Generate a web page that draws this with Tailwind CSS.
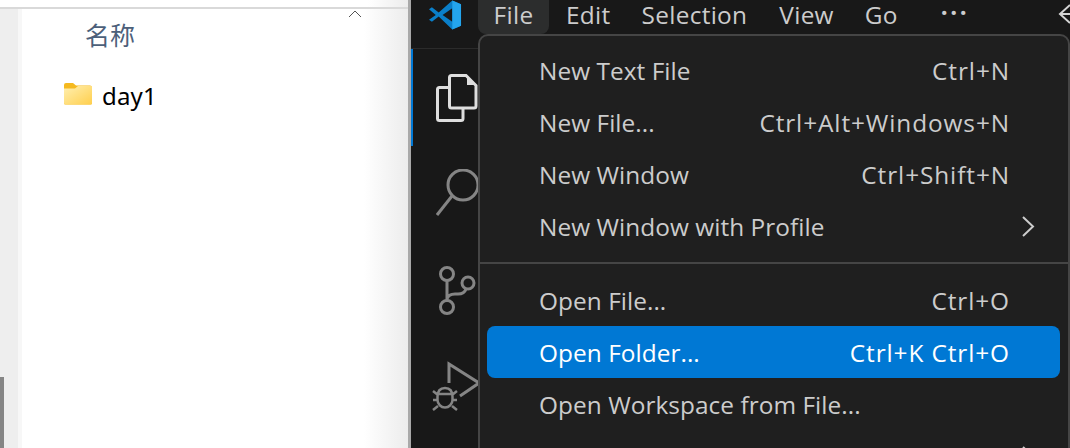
<!doctype html>
<html>
<head>
<meta charset="utf-8">
<script src="https://cdn.jsdelivr.net/npm/@tailwindcss/browser@4"></script>
</head>
<body class="m-0 overflow-hidden bg-white">
<div class="flex w-[1070px] h-[448px] overflow-hidden font-['Open_Sans','Noto_Sans_CJK_SC',sans-serif]">
  <!-- Explorer -->
  <div class="relative w-[408px] h-full flex flex-col bg-white">
    <div class="h-[7px] shrink-0 bg-white"></div>
    <div class="h-[2px] shrink-0 bg-[#d9d9d9]"></div>
    <div class="flex flex-1 min-h-0">
      <div class="relative w-[18px] bg-[#eeeeee]">
        <div class="absolute left-0 bottom-0 w-[4px] h-[71px] bg-[#858585]"></div>
      </div>
      <div class="w-[4px] bg-[#f7f7f7]"></div>
      <div class="relative flex-1 bg-white">
        <div class="pl-[63px] pt-[10px] h-[58px] text-[25px] leading-[30px] text-[#4c607a] font-['Noto_Sans_CJK_SC',sans-serif]">名称</div>
        <div class="flex items-center pl-[42px] pt-[14px] h-[44px]">
          <svg width="28" height="23" viewBox="0 0 28 23" class="shrink-0 -mt-[6px]">
            <defs><linearGradient id="f" x1="0" y1="0" x2="1" y2="1"><stop offset="0" stop-color="#ffefb0"/><stop offset="1" stop-color="#ffcf4d"/></linearGradient></defs>
            <path d="M0 3a2 2 0 0 1 2-2h7l3 2.500h14a2 2 0 0 1 2 2V21a1.500 1.500 0 0 1-1.500 1.500h-25A1.500 1.500 0 0 1 0 21z" fill="#f5b91f"/>
            <path d="M0 6.500h11l3-2.500h14v17a1.500 1.500 0 0 1-1.500 1.500h-25A1.500 1.500 0 0 1 0 21z" fill="url(#f)"/>
          </svg>
          <span class="ml-[10px] text-[24px] leading-[30px] tracking-[0.2px] text-black font-['Noto_Sans',sans-serif]">day1</span>
        </div>
        <svg width="14" height="8" viewBox="0 0 14 8" class="absolute left-[326px] top-[1px]"><path d="M1 7 7 1l6 6" fill="none" stroke="#555" stroke-width="1"/></svg>
        <div class="absolute right-0 top-0 bottom-0 w-[44px] bg-gradient-to-r from-white to-[#ececec]"></div>
      </div>
    </div>
    <div class="absolute right-0 top-0 w-[40px] h-[7px] bg-gradient-to-r from-white to-[#ececec]"></div>
  </div>
  <div class="w-[3px] bg-[#a9a9a9]"></div>

  <!-- VS Code -->
  <div class="relative flex-1 h-full flex flex-col bg-[#181818] text-[#cccccc]">
    <div class="h-[49px] shrink-0 flex border-b-[1px] border-[#2b2b2b]">
      <div class="w-[67px] shrink-0 flex items-start justify-center">
        <svg width="33" height="30" viewBox="0 0 34 30" class="ml-[1px]">
          <path d="M24 0 33 4V26L24 30 10 16.500 3 22 0 20 7 15 0 9 3 7 10 12.500z" fill="#0a7fc9"/>
          <path d="M24 8 14 15l10 7z" fill="#181818"/>
          <path d="M24 0 33 4V26L24 30z" fill="#24a5ed"/>
        </svg>
      </div>
      <div class="flex text-[24.400px] leading-[30px] h-[34px] items-start">
        <div class="w-[71px] h-[34px] text-center bg-[#2c2d2d] rounded-b-[8px] tracking-[0.3px]">File</div>
        <div class="pl-[17px] tracking-[0.3px]">Edit</div>
        <div class="pl-[31px] tracking-[0.3px]">Selection</div>
        <div class="pl-[32px] tracking-[0.3px]">View</div>
        <div class="pl-[31px] tracking-[0.3px]">Go</div>
        <div class="pl-[43px] leading-[26px] tracking-[2.500px] font-bold">···</div>
      </div>
      <svg width="14" height="22" viewBox="0 0 14 22" class="absolute left-[647px] top-[3px]">
        <path d="M12 2 2 11l10 9M2 11h12" fill="none" stroke="#d5d5d5" stroke-width="2"/>
      </svg>
    </div>

    <div class="relative w-[67px] flex-1 flex flex-col items-center">
      <div class="absolute left-0 top-0 w-[2px] h-[97px] bg-[#0078d4]"></div>
      <svg width="44" height="50" viewBox="0 0 44 50" class="absolute left-[24px] top-[24px]" fill="none" stroke="#dedede" stroke-width="3">
        <path d="M13 14.500H4.500a2 2 0 0 0-2 2v29a2 2 0 0 0 2 2h21.500a2 2 0 0 0 2-2v-9.500"/>
        <path d="M14.500 4.500a2 2 0 0 1 2-2H31l10 10V33a2 2 0 0 1-2 2H16.500a2 2 0 0 1-2-2z"/>
        <path d="M32 4v8h8z" fill="#dedede" stroke="none"/>
      </svg>
      <svg width="44" height="50" viewBox="0 0 44 50" class="absolute left-[25px] top-[120px]" fill="none" stroke="#858585" stroke-width="3">
        <circle cx="27" cy="16" r="15"/><path d="M16 27 1 46"/>
      </svg>
      <svg width="38" height="50" viewBox="0 0 38 50" class="absolute left-[27px] top-[216px]" fill="none" stroke="#858585" stroke-width="3">
        <circle cx="9" cy="9" r="6.500"/><circle cx="9" cy="42" r="6.500"/><circle cx="30" cy="18" r="6"/><path d="M9 16V35M9 34c1-4 4-5 8-5h3c5 0 7-2 8-5"/>
      </svg>
      <svg width="48" height="56" viewBox="0 0 48 56" class="absolute left-[21px] top-[312px]" fill="none" stroke="#858585">
        <path d="M17 22V3L47 22 28 35" stroke-width="3"/>
        <path d="M5.500 36c0-6 3-9 7.500-9s7.500 3 7.500 9v3c0 4-3.500 7.500-7.500 7.500S5.500 43 5.500 39zM5.500 33h15M1 30l5 4M25 30l-5 4M1 39h5M25 39h-5M1 49l5-4M25 49l-5-4" stroke-width="2.500"/>
      </svg>
    </div>

    <!-- menu -->
    <div class="absolute left-[67px] top-[34px] w-[592px] h-[430px] bg-[#1f1f1f] border-2 border-[#454545] rounded-[10px] pl-[7px] pr-[8px] pt-[8px] text-[24.400px] leading-[30px] tracking-[0.05px]">
      <div class="flex items-center justify-between h-[52px] pt-[2px] pl-[52px] pr-[50px]"><span>New Text File</span><span class="tracking-[0.9px]">Ctrl+N</span></div>
      <div class="flex items-center justify-between h-[52px] pt-[2px] pl-[52px] pr-[50px]"><span>New File...</span><span class="tracking-[0.9px]">Ctrl+Alt+Windows+N</span></div>
      <div class="flex items-center justify-between h-[52px] pt-[2px] pl-[52px] pr-[50px]"><span>New Window</span><span class="tracking-[0.9px]">Ctrl+Shift+N</span></div>
      <div class="relative flex items-center justify-between h-[52px] pt-[2px] pl-[52px] pr-[50px]"><span>New Window with Profile</span>
        <svg width="13" height="21" viewBox="0 0 13 21" class="absolute right-[25px] top-[16px]"><path d="M1 1l10 9.500L1 20" fill="none" stroke="#cccccc" stroke-width="2"/></svg>
      </div>
      <div class="h-[2px] bg-[#454545] -ml-[7px] -mr-[8px] my-[10px]"></div>
      <div class="flex items-center justify-between h-[52px] pt-[2px] pl-[52px] pr-[50px] mt-[4px]"><span>Open File...</span><span class="tracking-[0.9px]">Ctrl+O</span></div>
      <div class="flex items-center justify-between h-[52px] pt-[2px] pl-[52px] pr-[50px] bg-[#0078d4] rounded-[8px] text-white"><span>Open Folder...</span><span class="tracking-[0.9px]">Ctrl+K Ctrl+O</span></div>
      <div class="flex items-center justify-between h-[52px] pt-[2px] pl-[52px] pr-[50px]"><span>Open Workspace from File...</span></div>
      <div class="relative h-[52px]">
        <svg width="13" height="21" viewBox="0 0 13 21" class="absolute right-[25px] top-[16px]"><path d="M1 1l10 9.500L1 20" fill="none" stroke="#cccccc" stroke-width="2"/></svg>
      </div>
    </div>
  </div>
</div>
</body>
</html>
